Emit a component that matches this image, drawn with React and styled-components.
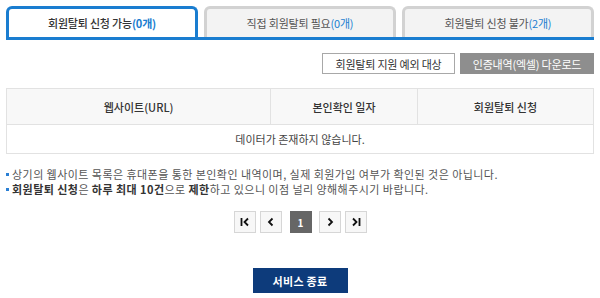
import React from "react";
import styled, { createGlobalStyle } from "styled-components";

const GlobalStyle = createGlobalStyle`
  html, body {
    margin: 0;
    padding: 0;
    background: #fff;
  }
  body {
    font-family: "Noto Sans CJK KR", "Noto Sans", sans-serif;
    color: #333;
  }
`;

const Page = styled.div`
  width: 600px;
  height: 298px;
  box-sizing: border-box;
  padding: 6px 6px 0;
  overflow: hidden;
`;

const TabBar = styled.div`
  display: flex;
  gap: 6px;
  border-bottom: 3px solid #1a7dd0;
`;

const Tab = styled.div`
  flex: 1;
  height: 31px;
  box-sizing: border-box;
  border: 3px solid ${(p) => (p.$active ? "#1a7dd0" : "#d2d2d2")};
  border-bottom: none;
  border-radius: 6px 6px 0 0;
  background: ${(p) => (p.$active ? "#fff" : "#f3f3f3")};
  display: flex;
  align-items: center;
  justify-content: center;
  font-size: 11px;
  color: ${(p) => (p.$active ? "#333" : "#555")};
  font-weight: ${(p) => (p.$active ? 500 : 400)};
  letter-spacing: -0.2px;
`;

const Count = styled.span`
  color: #1a7dd0;
  font-weight: ${(p) => (p.$bold ? 700 : 400)};
`;

const ActionRow = styled.div`
  display: flex;
  justify-content: flex-end;
  gap: 5px;
  margin-top: 13px;
`;

const ActionButton = styled.button`
  height: 21px;
  width: ${(p) => p.$w}px;
  box-sizing: border-box;
  border: 1px solid ${(p) => (p.$dark ? "#8e8e8e" : "#a8a8a8")};
  background: ${(p) => (p.$dark ? "#8e8e8e" : "#fff")};
  color: ${(p) => (p.$dark ? "#fff" : "#333")};
  font-family: inherit;
  font-size: 11px;
  padding: 0;
  letter-spacing: -0.2px;
`;

const Table = styled.table`
  width: 100%;
  margin-top: 14px;
  border-collapse: collapse;
  table-layout: fixed;
  font-size: 11px;
`;

const Th = styled.th`
  height: 35px;
  padding: 0;
  background: #f8f8f8;
  border: 1px solid #e2e2e2;
  font-weight: 500;
  color: #333;
`;

const Td = styled.td`
  height: 28px;
  padding: 0;
  border: 1px solid #e2e2e2;
  text-align: center;
  color: #444;
`;

const Notes = styled.ul`
  list-style: none;
  margin: 13px 0 0;
  padding: 0;
  font-size: 11px;
  color: #555;
`;

const Note = styled.li`
  position: relative;
  padding-left: 6px;
  line-height: 15px;
  letter-spacing: 0.45px;
  white-space: nowrap;
  &::before {
    content: "";
    position: absolute;
    left: 0;
    top: 6px;
    width: 3px;
    height: 3px;
    background: #2a7fd4;
  }
`;

const Strong = styled.b`
  font-weight: 700;
  color: #333;
`;

const Pager = styled.div`
  display: flex;
  justify-content: center;
  align-items: center;
  margin-top: 14px;
`;

const PageGroup = styled.div`
  display: flex;
  gap: 4px;
`;

const PageButton = styled.button`
  width: 22px;
  height: 22px;
  box-sizing: border-box;
  padding: 0;
  border: 1px solid ${(p) => (p.$current ? "#666" : "#d6d6d6")};
  background: ${(p) => (p.$current ? "#666" : "#f7f7f7")};
  color: ${(p) => (p.$current ? "#fff" : "#333")};
  font-family: inherit;
  font-size: 10px;
  font-weight: 700;
  display: flex;
  align-items: center;
  justify-content: center;
  margin: 0 ${(p) => (p.$current ? "7px" : "0")} 0 ${(p) => (p.$current ? "8px" : "0")};
`;

const Footer = styled.div`
  display: flex;
  justify-content: center;
  margin-top: 35px;
`;

const EndButton = styled.button`
  width: 95px;
  height: 25px;
  border: none;
  background: #0d3b7b;
  color: #fff;
  font-family: inherit;
  font-size: 11px;
  font-weight: 700;
  padding: 0;
  letter-spacing: 0.3px;
`;

const Arrow = ({ dir, bar }) => (
  <svg width="12" height="12" viewBox="0 0 12 12" fill="none" stroke="#111" strokeWidth="1.8">
    {dir === "left" ? (
      <>
        {bar && <line x1="2.5" y1="2" x2="2.5" y2="10" />}
        <polyline points={bar ? "9,2.5 5.5,6 9,9.5" : "7.5,2.5 4,6 7.5,9.5"} />
      </>
    ) : (
      <>
        <polyline points={bar ? "3,2.5 6.5,6 3,9.5" : "4.5,2.5 8,6 4.5,9.5"} />
        {bar && <line x1="9.5" y1="2" x2="9.5" y2="10" />}
      </>
    )}
  </svg>
);

export default function App() {
  return (
    <Page>
      <GlobalStyle />
      <TabBar>
        <Tab $active>
          회원탈퇴 신청 가능<Count $bold>(0개)</Count>
        </Tab>
        <Tab>
          직접 회원탈퇴 필요<Count>(0개)</Count>
        </Tab>
        <Tab>
          회원탈퇴 신청 불가<Count>(2개)</Count>
        </Tab>
      </TabBar>

      <ActionRow>
        <ActionButton $w={133}>회원탈퇴 지원 예외 대상</ActionButton>
        <ActionButton $w={134} $dark>
          인증내역(엑셀) 다운로드
        </ActionButton>
      </ActionRow>

      <Table>
        <colgroup>
          <col style={{ width: "45%" }} />
          <col style={{ width: "25%" }} />
          <col style={{ width: "30%" }} />
        </colgroup>
        <thead>
          <tr>
            <Th>웹사이트(URL)</Th>
            <Th>본인확인 일자</Th>
            <Th>회원탈퇴 신청</Th>
          </tr>
        </thead>
        <tbody>
          <tr>
            <Td colSpan={3}>데이터가 존재하지 않습니다.</Td>
          </tr>
        </tbody>
      </Table>

      <Notes>
        <Note>
          상기의 웹사이트 목록은 휴대폰을 통한 본인확인 내역이며, 실제 회원가입 여부가 확인된 것은 아닙니다.
        </Note>
        <Note>
          <Strong>회원탈퇴 신청</Strong>은 <Strong>하루 최대 10건</Strong>으로 <Strong>제한</Strong>하고 있으니 이점 널리
          양해해주시기 바랍니다.
        </Note>
      </Notes>

      <Pager>
        <PageGroup>
          <PageButton>
            <Arrow dir="left" bar />
          </PageButton>
          <PageButton>
            <Arrow dir="left" />
          </PageButton>
        </PageGroup>
        <PageButton $current>1</PageButton>
        <PageGroup>
          <PageButton>
            <Arrow dir="right" />
          </PageButton>
          <PageButton>
            <Arrow dir="right" bar />
          </PageButton>
        </PageGroup>
      </Pager>

      <Footer>
        <EndButton>서비스 종료</EndButton>
      </Footer>
    </Page>
  );
}
